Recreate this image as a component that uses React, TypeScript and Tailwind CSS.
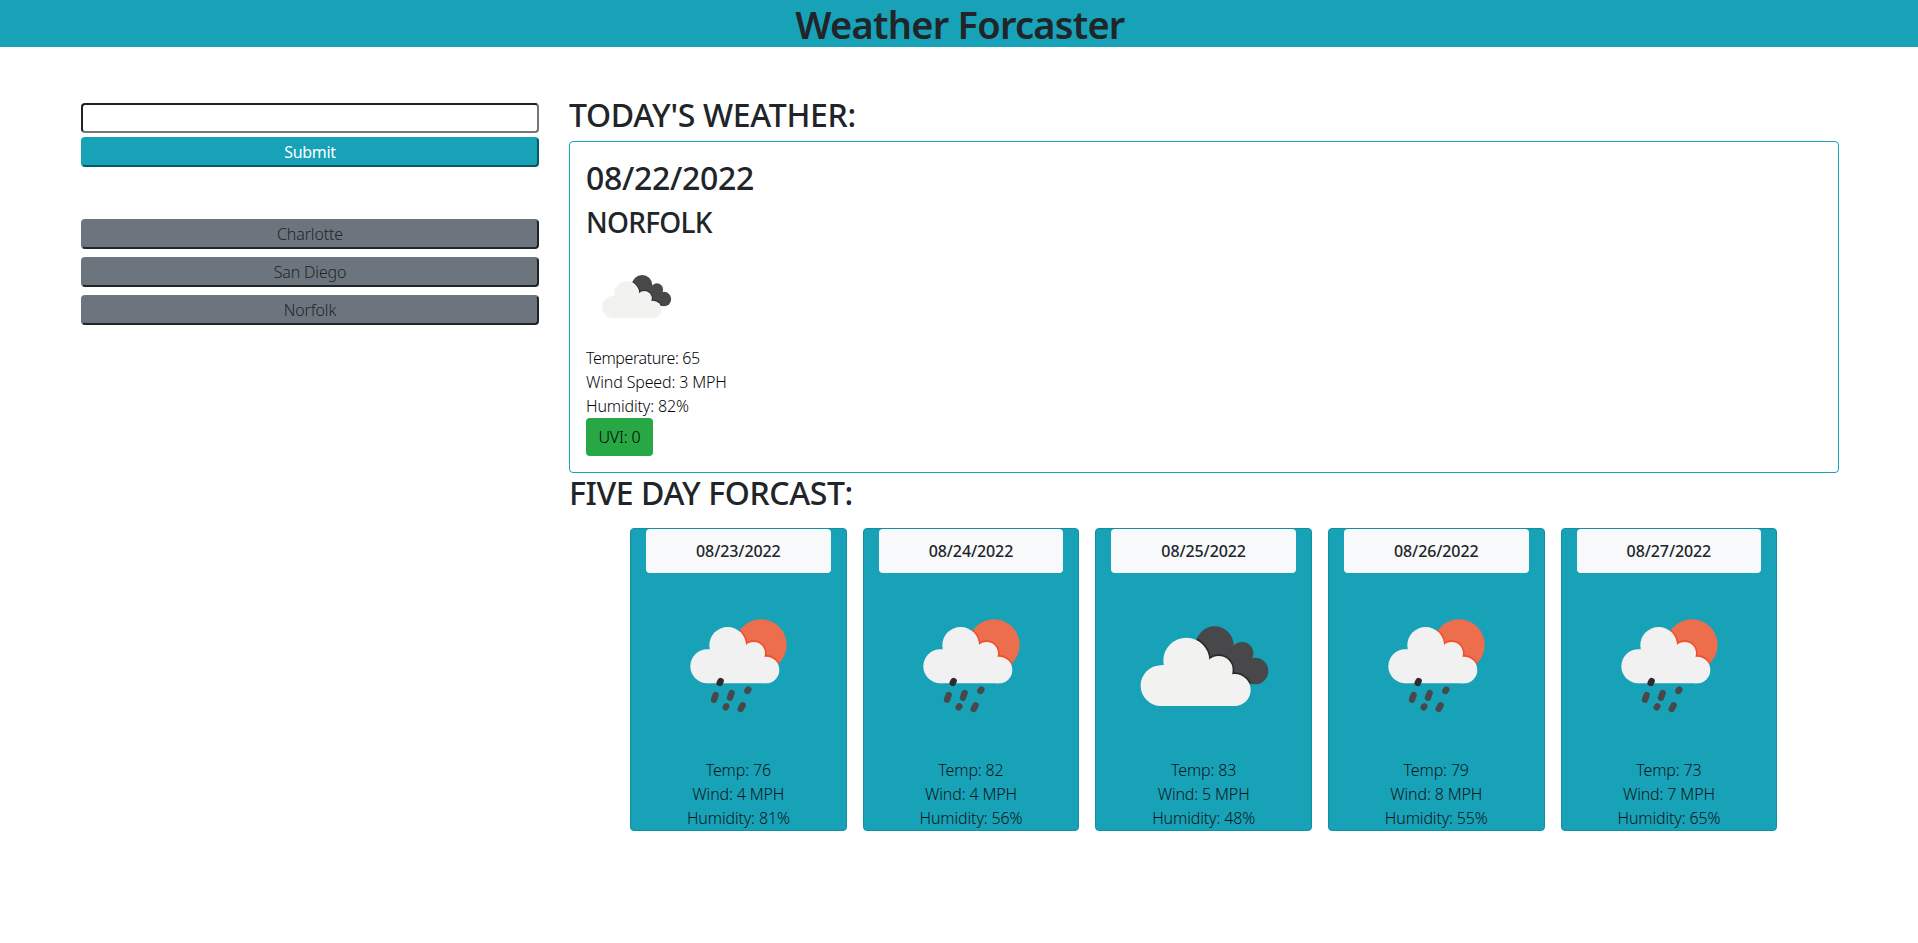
import React from "react";

function RainIcon() {
  return (
    <svg viewBox="78 189 554 554" className="block aspect-square w-full blur-[0.4px]" aria-hidden="true">
      <defs>
        <clipPath id="sun">
          <circle cx="423" cy="405" r="77" />
        </clipPath>
      </defs>
      <circle cx="423" cy="405" r="77" fill="#ec6e4c" />
      <g clipPath="url(#sun)" fill="#f04f2c">
        <circle cx="323" cy="406" r="60" />
        <circle cx="401" cy="430" r="39" />
        <circle cx="438" cy="480" r="45" />
      </g>
      <g fill="#f1f1f1">
        <circle cx="262" cy="469" r="51" />
        <circle cx="323" cy="406" r="55" />
        <circle cx="401" cy="430" r="34" />
        <circle cx="438" cy="480" r="40" />
        <path d="M262 419H323V406H378L401 430L438 480V520H262Z" />
      </g>
      <g stroke="#48484a" strokeWidth="19" strokeLinecap="round" strokeLinejoin="round">
        <path d="M302 513L299 519" stroke="#2c2c2e" />
        <path d="M287 555L282 569" />
        <path d="M335 549L330 563" />
        <path d="M385 539L382 543" />
        <path d="M319 589L317 592" />
        <path d="M368 586L362 597" />
      </g>
    </svg>
  );
}

function CloudIcon() {
  return (
    <svg viewBox="93 189 554 554" className="block aspect-square w-full blur-[0.3px]" aria-hidden="true">
      <defs>
        <clipPath id="backCloud">
          <circle cx="404" cy="406" r="57" />
          <circle cx="486" cy="430" r="34" />
          <circle cx="525" cy="483" r="40" />
          <path d="M404 406L461 410L486 430L525 483L515 523L430 480Z" />
        </clipPath>
      </defs>
      <g fill="#48484a">
        <circle cx="404" cy="406" r="57" />
        <circle cx="486" cy="430" r="34" />
        <circle cx="525" cy="483" r="40" />
        <path d="M404 406L461 410L486 430L525 483L515 523L430 480Z" />
      </g>
      <g clipPath="url(#backCloud)" fill="#2a2a2c">
        <circle cx="319" cy="452" r="74" />
        <circle cx="416" cy="480" r="47" />
        <circle cx="464" cy="540" r="53" />
      </g>
      <g fill="#f2f2f0">
        <circle cx="243" cy="527" r="61" />
        <circle cx="319" cy="452" r="69" />
        <circle cx="416" cy="480" r="42" />
        <circle cx="464" cy="540" r="48" />
        <path d="M243 466H319V452H388L416 480L464 540V588H243Z" />
      </g>
    </svg>
  );
}

const cities = ["Charlotte", "San Diego", "Norfolk"];

const days = [
  { date: "08/23/2022", temp: 76, wind: 4, humidity: 81, rain: true },
  { date: "08/24/2022", temp: 82, wind: 4, humidity: 56, rain: true },
  { date: "08/25/2022", temp: 83, wind: 5, humidity: 48, rain: false },
  { date: "08/26/2022", temp: 79, wind: 8, humidity: 55, rain: true },
  { date: "08/27/2022", temp: 73, wind: 7, humidity: 65, rain: true },
];

export default function App() {
  return (
    <div className="min-h-screen bg-white font-['Noto_Sans',sans-serif] text-base font-light tracking-[-0.15px] text-[#212529]">
      <header className="h-[47px] bg-[#17a2b8] text-center">
        <h1 className="pt-px pl-0.5 text-[38px] leading-[46px] font-semibold tracking-[-0.75px]">Weather Forcaster</h1>
      </header>
      <main className="flex pt-12 pl-[81px]">
        <aside className="w-[458px] pt-2">
          <input
            aria-label="City"
            className="block h-[30px] w-full rounded border-2 border-t-[#212121] border-r-[#767676] border-b-[#767676] border-l-[#212121] px-1 outline-none"
          />
          <button className="mt-1 block h-[30px] w-full rounded border-2 border-t-[#17a2b8] border-r-[#0b5763] border-b-[#0b5763] border-l-[#17a2b8] bg-[#17a2b8] leading-[27px] font-normal tracking-[-0.3px] text-white">
            Submit
          </button>
          <div className="mt-[52px] flex flex-col gap-2">
            {cities.map((city) => (
              <button
                key={city}
                className="h-[30px] w-full rounded border-2 border-t-[#6c757d] border-r-[#212529] border-b-[#212529] border-l-[#6c757d] bg-[#6c757d] leading-[27px]"
              >
                {city}
              </button>
            ))}
          </div>
        </aside>
        <section className="ml-[30px] w-[1270px]">
          <h2 className="h-[46px] text-[32px] leading-[40px] font-medium tracking-[-0.3px]">TODAY'S WEATHER:</h2>
          <div className="h-[332px] rounded border border-[#17a2b8] p-4">
            <h2 className="h-[46px] text-[32px] leading-[40px] font-medium tracking-[-0.3px]">08/22/2022</h2>
            <h3 className="h-[42px] text-[28px] leading-[37px] font-medium tracking-[-0.7px]">NORFOLK</h3>
            <div className="w-[100px]">
              <CloudIcon />
            </div>
            <div className="h-[72px] leading-6 text-[#050709]">
              <p className="tracking-[-0.4px]">Temperature: 65</p>
              <p>Wind Speed: 3 MPH</p>
              <p>Humidity: 82%</p>
            </div>
            <button className="block h-[38px] w-[67px] rounded bg-[#28a745] text-black">UVI: 0</button>
          </div>
          <h2 className="h-[55px] text-[32px] leading-[40px] font-medium tracking-[-0.4px]">FIVE DAY FORCAST:</h2>
          <div className="ml-[61px] flex w-[1147.2px] gap-4">
            {days.map((day) => (
              <article
                key={day.date}
                className="h-[303px] flex-1 rounded border border-[#148ea1] bg-[#17a2b8] px-[15px] text-center"
              >
                <h6 className="h-11 rounded bg-[#f8f9fa] leading-[45px] font-medium tracking-[-0.1px]">{day.date}</h6>
                {day.rain ? <RainIcon /> : <CloudIcon />}
                <div className="leading-6 text-[#10161a]">
                  <p>Temp: {day.temp}</p>
                  <p>Wind: {day.wind} MPH</p>
                  <p>Humidity: {day.humidity}%</p>
                </div>
              </article>
            ))}
          </div>
        </section>
      </main>
    </div>
  );
}
